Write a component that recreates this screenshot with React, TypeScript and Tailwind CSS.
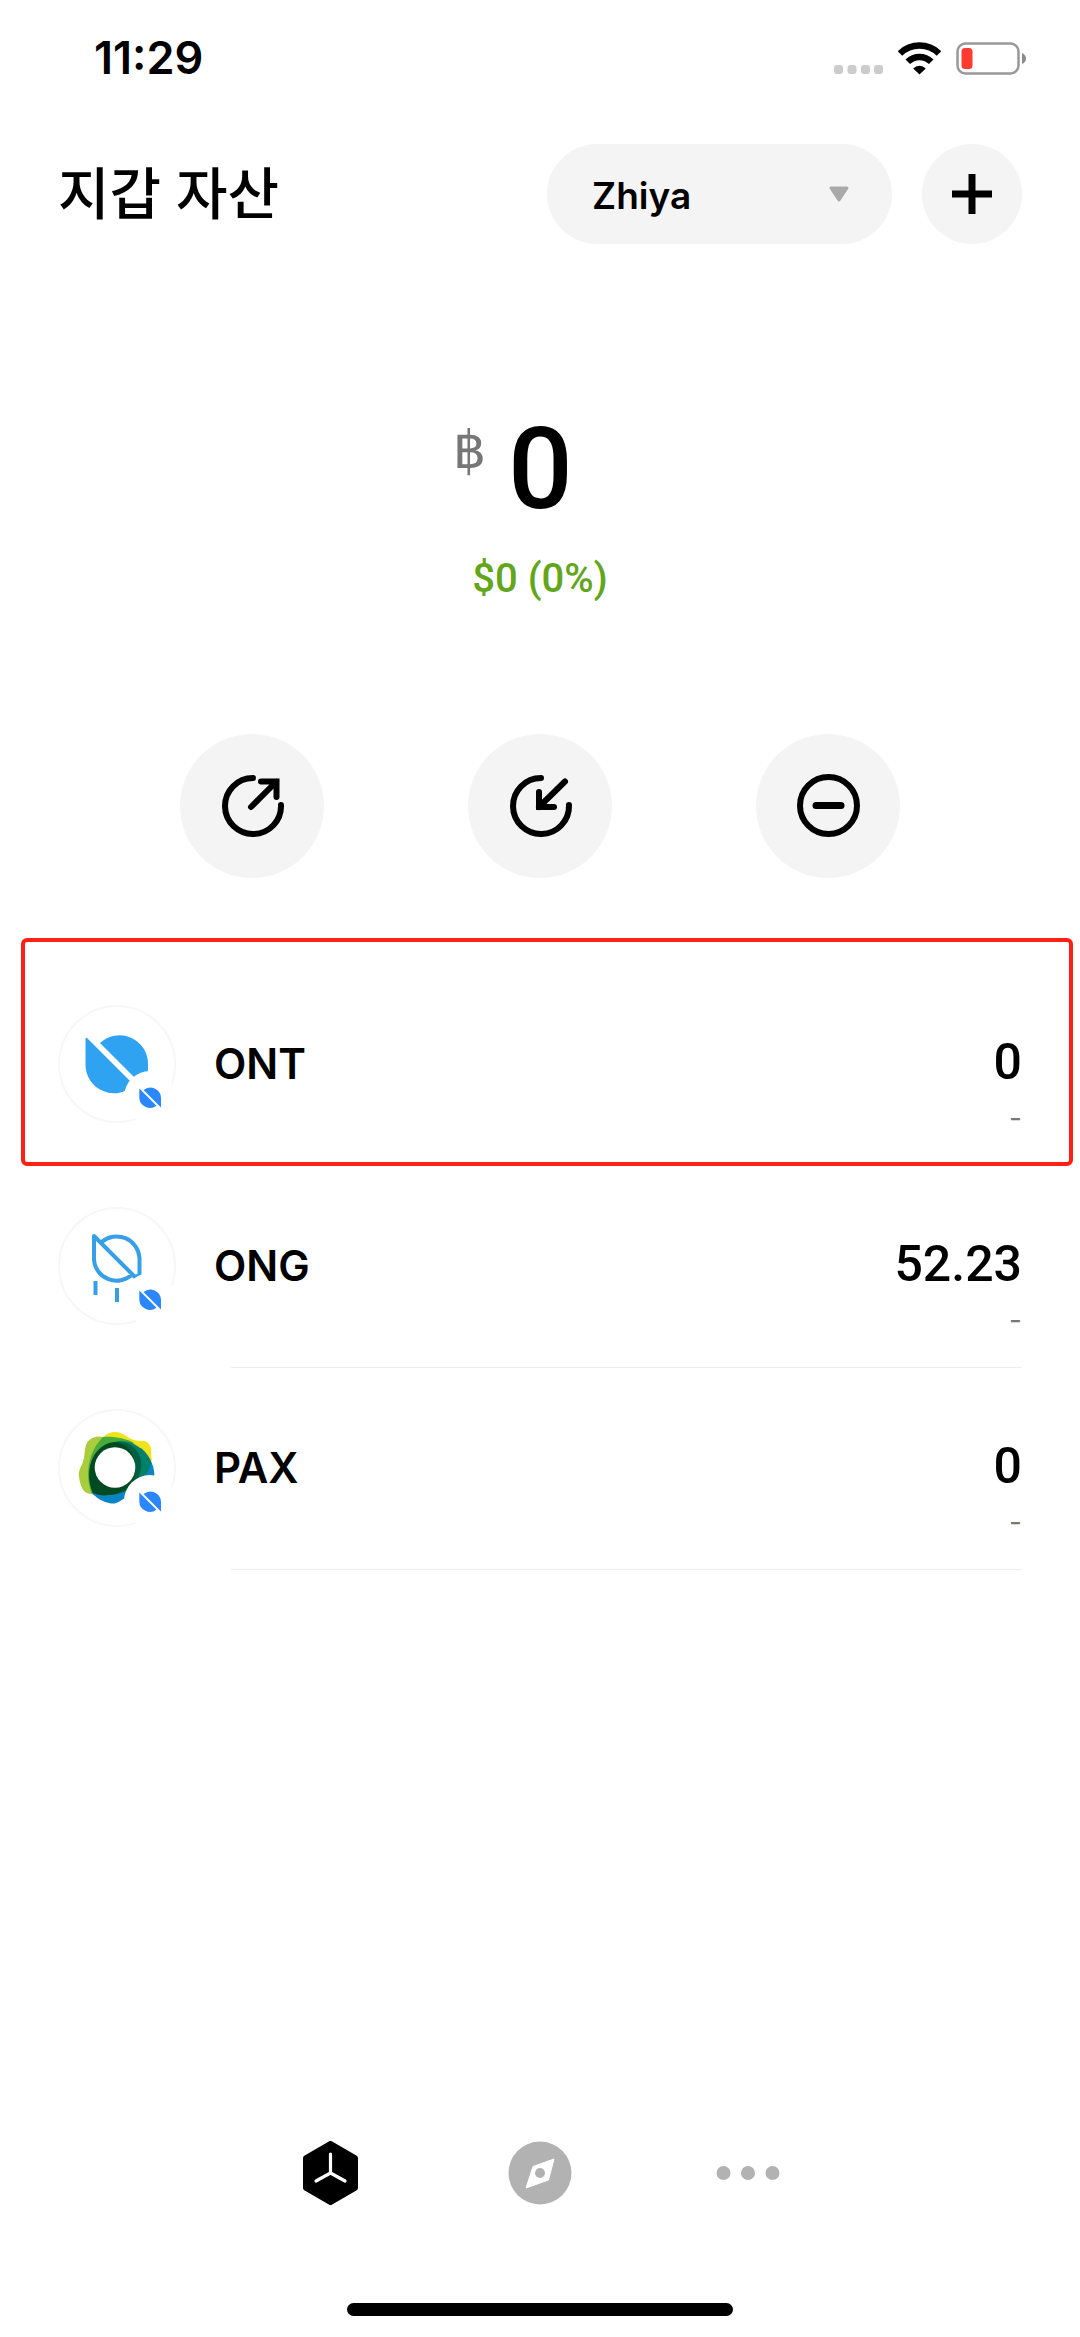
import React from 'react';

function StatusBar() {
  return (
    <div className="flex h-[116px] items-center justify-between pl-[94px] pr-[54px]">
      <span className="text-[45px] leading-[50px] font-semibold">11:29</span>
      <div className="flex items-center">
        <svg viewBox="0 0 49 33" className="mr-[15px] h-[33px] w-[49px]" fill="#cccccc" aria-hidden="true">
          <rect x="0" y="23" width="9" height="9" rx="3" />
          <rect x="13.5" y="23" width="9" height="9" rx="3" />
          <rect x="27" y="23" width="9" height="9" rx="3" />
          <rect x="40" y="23" width="9" height="9" rx="3" />
        </svg>
        <svg viewBox="0 0 43 33" className="mr-[15px] h-[33px] w-[43px]" aria-hidden="true">
          <g fill="none" stroke="#000" strokeWidth="6.5">
            <path d="M2 11.5A28 28 0 0 1 41 11.5" />
            <path d="M9.8 19.8A16.6 16.6 0 0 1 33.2 19.8" />
          </g>
          <path d="M21.5 32.5L15.2 26.4A9 9 0 0 1 27.8 26.4Z" />
        </svg>
        <svg viewBox="0 0 70 33" className="h-[33px] w-[70px]" aria-hidden="true">
          <rect x="1.5" y="1.5" width="61" height="30" rx="8" fill="none" stroke="#999" strokeWidth="2.5" />
          <rect x="5.5" y="6" width="11" height="21" rx="3.5" fill="#ff3b30" />
          <path d="M66 11Q70 13 70 16.5T66 22Z" fill="#8c8c8c" />
        </svg>
      </div>
    </div>
  );
}

function Header() {
  return (
    <header className="flex items-center pl-[58px] pr-[58px] pt-[28px]">
      <h1 className="flex-1 text-[56px] leading-[100px] font-medium">지갑 자산</h1>
      <button className="flex h-[100px] w-[345px] items-center justify-between rounded-full bg-[#f4f4f4] pl-[45px] pr-[43px]">
        <span className="pt-[4px] text-[37px] leading-[44px] font-semibold">Zhiya</span>
        <svg viewBox="0 0 20 16" className="h-[16px] w-[20px]" aria-hidden="true">
          <path d="M2 2H18L10 14Z" fill="#a9a9a9" stroke="#a9a9a9" strokeWidth="3" strokeLinejoin="round" />
        </svg>
      </button>
      <button aria-label="Add" className="ml-[30px] flex size-[100px] items-center justify-center rounded-full bg-[#f4f4f4]">
        <svg viewBox="0 0 40 40" className="size-[40px]" stroke="#000" strokeWidth="7" aria-hidden="true">
          <path d="M0 20H40M20 0V40" />
        </svg>
      </button>
    </header>
  );
}

function Balance() {
  return (
    <section className="flex flex-col items-center pt-[159px]">
      <div className="flex items-start justify-center pr-[54px] font-['Roboto',sans-serif]">
        <span className="mt-[20px] mr-[22px] text-[52px] leading-[56px] text-[#777]">฿</span>
        <span className="text-[114px] leading-[132px] font-medium">0</span>
      </div>
      <p className="mt-[16px] font-['Roboto',sans-serif] text-[40px] leading-[56px] font-medium text-[#62a61c]">$0 (0%)</p>
    </section>
  );
}

const actions = [
  {
    label: 'Send',
    art: (
      <>
        <path d="M41 12A28 28 0 1 0 69 39" />
        <path d="M39 41L64.5 15.500M49 15.500H64.500V31" />
      </>
    ),
  },
  {
    label: 'Receive',
    art: (
      <>
        <path d="M41 12A28 28 0 1 0 69 39" />
        <path d="M65 15.500L39 41M39 26V41H54" />
      </>
    ),
  },
  {
    label: 'Manage',
    art: (
      <>
        <circle cx="40.500" cy="39.500" r="28.500" />
        <path d="M28 39.500H53" strokeWidth="7" />
      </>
    ),
  },
];

function Actions() {
  return (
    <div className="flex justify-center gap-[144px] pt-[127px]">
      {actions.map((a) => (
        <button key={a.label} aria-label={a.label} className="flex size-[144px] items-center justify-center rounded-full bg-[#f4f4f4]">
          <svg viewBox="0 0 80 80" className="size-[80px]" fill="none" stroke="#000" strokeWidth="6" strokeLinecap="round" aria-hidden="true">
            {a.art}
          </svg>
        </button>
      ))}
    </div>
  );
}

function TokenIcon({ children }: { children: React.ReactNode }) {
  return (
    <svg viewBox="0 0 120 120" className="size-[120px] shrink-0" aria-hidden="true">
      <circle cx="60" cy="60" r="58" fill="#fff" stroke="#f7f7f7" strokeWidth="2" />
      {children}
      <circle cx="93" cy="93" r="26" fill="#fff" />
      <path d="M82.300 84.500L99.500 101.700A10.700 10.700 0 0 1 82.300 93.500Z" fill="#2b87ff" />
      <path d="M86.500 86A10.700 10.700 0 0 1 104 94V103.500Z" fill="#2b87ff" />
    </svg>
  );
}

const ont = (
  <g fill="#2fa3f2">
    <path d="M28.500 35Q28.500 32.500 31 35L77 81A28.500 28.500 0 0 1 28.500 61Z" />
    <path d="M43 39A28.500 28.500 0 0 1 91 60V87Z" />
  </g>
);

const ong = (
  <g fill="none" stroke="#379fe8" strokeWidth="4">
    <path d="M75.500 68A22.500 22.500 0 0 1 37 52V30L78 71L82.500 69V52A23 23 0 0 0 44.500 36" strokeLinejoin="round" />
    <path d="M38.500 75V89M60 82V96" />
  </g>
);

const pax = (
  <>
    <path d="M44 32C48 26 53 24 58 24C66 24 70 30 77 32C83 34 88 31 92 36C96 41 93 46 95 52L88 60H50Z" fill="#efe31a" />
    <path d="M46 29C38 27 31 31 29 37C27 43 28 48 26 54C24 59 21 63 22 69C23 75 24 80 28 84C32 87 38 86 44 86L60 60L74 34C66 29 56 30 46 29Z" fill="#a9cd3c" />
    <path d="M46 29C56 28 68 30 77 35L66 50L34 84C28 66 31 44 46 29Z" fill="#49ab3a" />
    <path d="M34 84C39 90 46 94 54 95.500C61 96 64 92 68 90L97 72C99 62 94 48 84 40L60 60Z" fill="#0a84c6" />
    <path d="M58 34C72 30 88 40 94 54C92 66 82 78 70 83C58 87 44 87 35 84Z" fill="#008066" />
    <path d="M54 35C70 30 86 42 84 60C82 76 68 87 52 87Z" fill="#005f40" />
    <path d="M52 35C66 31 79 44 78 60C80 74 68 86 52 87C46 88 40 87 36 85C28 68 32 42 52 35Z" fill="#004a22" />
    <circle cx="58" cy="59.500" r="20.300" fill="#fff" />
  </>
);

const tokens = [
  { name: 'ONT', value: '0', art: ont },
  { name: 'ONG', value: '52.23', art: ong },
  { name: 'PAX', value: '0', art: pax },
];

function TokenList() {
  return (
    <ul className="mt-[60px] pl-[21px] pr-[7px]">
      {tokens.map((t, i) => (
        <li key={t.name} className={i === 0 ? 'rounded-[6px] border-4 border-[#ff2015] pt-[24px] pr-[47px] pl-[32px]' : 'pt-[2px] pr-[51px] pl-[36px]'}>
          <div className="flex items-center">
            <TokenIcon>{t.art}</TokenIcon>
            <span className="ml-[37px] flex-1 text-[42px] leading-[196px] font-semibold">{t.name}</span>
            <div className="flex flex-col items-end gap-[8px] pt-[44px]">
              <span className="font-['Roboto',sans-serif] text-[50px] leading-[56px] font-medium">{t.value}</span>
              <span className="text-[28px] leading-[40px] text-[#777]">-</span>
            </div>
          </div>
          {i > 0 && <div className="mt-[3px] ml-[174px] h-px bg-[#eeeeee]" />}
        </li>
      ))}
    </ul>
  );
}

function TabBar() {
  return (
    <nav className="mt-auto flex justify-center gap-[144px] pb-[98px]">
      <button aria-label="Wallet">
        <svg viewBox="0 0 64 64" className="size-[64px]" aria-hidden="true">
          <path d="M30.500 2.500L55.500 17V47L30.500 61.500L5.500 47V17Z" stroke="#000" strokeWidth="5" strokeLinejoin="round" />
          <path d="M30.500 13V32M30.500 32L16 40M30.500 32L45 40" stroke="#fff" strokeWidth="3.200" strokeLinecap="round" />
        </svg>
      </button>
      <button aria-label="Discover">
        <svg viewBox="0 0 64 64" className="size-[64px]" aria-hidden="true">
          <circle cx="32" cy="32" r="31.500" fill="#b2b2b2" />
          <path d="M46 18L40.500 39L18 47L25 25.500Z" fill="#fff" stroke="#fff" strokeLinejoin="round" />
          <circle cx="32" cy="32" r="5" fill="#b2b2b2" />
        </svg>
      </button>
      <button aria-label="More">
        <svg viewBox="0 0 64 64" className="size-[64px]" fill="#b2b2b2" aria-hidden="true">
          <circle cx="7.500" cy="32" r="7" />
          <circle cx="32" cy="32" r="7" />
          <circle cx="56.500" cy="32" r="7" />
        </svg>
      </button>
    </nav>
  );
}

export default function App() {
  return (
    <div className="flex min-h-screen flex-col bg-white font-['Inter','Noto_Sans_CJK_KR',sans-serif] text-black">
      <StatusBar />
      <Header />
      <main>
        <Balance />
        <Actions />
        <TokenList />
      </main>
      <TabBar />
      <div className="mx-auto mb-[21px] h-[13px] w-[386px] rounded-full bg-black" />
    </div>
  );
}
